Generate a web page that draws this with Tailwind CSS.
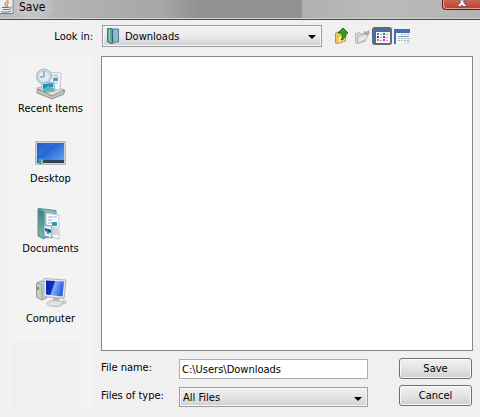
<!DOCTYPE html>
<html lang="en">
  <head>
    <meta charset="UTF-8" />
    <meta name="viewport" content="width=device-width, initial-scale=1.0" />
    <title>Save</title>
    <script src="https://cdn.jsdelivr.net/npm/@tailwindcss/browser@4"></script>
  </head>
  <body class="min-h-screen flex flex-col bg-[#f0f0f0] font-['DejaVu_Sans_Condensed','DejaVu_Sans',sans-serif] text-[11px] leading-4 text-black">
    <!-- Title bar -->
    <header class="flex h-5 shrink-0 items-start justify-between overflow-hidden border-b border-[#4c4c4c] bg-[linear-gradient(90deg,#bcbcbc_0%,#b4b4b4_12%,#a6a6a6_34%,#929292_41%,#929292_63%,#b0b0b0_63%,#bababa_78%,#b4b4b4_100%)] shadow-[inset_0_-1px_0_#d0d0d0]">
      <div class="flex items-start gap-[5px]">
        <svg class="h-[14px] w-[14px]" viewBox="0 0 14 14" aria-hidden="true">
          <path d="M0 0h13v13H0z" fill="#e9eef2" />
          <path d="M13 0v13.5H0" fill="none" stroke="#73828e" />
          <path d="M8 0C8 2 4 3 5 5l1 2M9 2C6 4 8 5 7 7" fill="none" stroke="#e98a35" stroke-width="1.3" />
          <path d="M2 7.500h7M3 9.500h6M9.500 7c3-.5 2 2-.5 2.500M1 11.500c3 1 8 1 10-.5" fill="none" stroke="#547b9b" />
        </svg>
        <h1 class="rounded-full bg-white/20 text-[12px] leading-[14px] shadow-[0_0_8px_6px_rgba(255,255,255,0.2)]">Save</h1>
      </div>
      <button type="button" aria-label="Close" class="flex h-[10px] w-[38px] items-start justify-center rounded-bl-[4px] border-b border-l border-[#5c1d15] bg-linear-to-b from-[#c4685a] to-[#c53a20] shadow-[inset_1px_-1px_0_#e7a092]">
        <svg class="h-[7px] w-3" viewBox="0 0 12 7" aria-hidden="true">
          <path d="M3 0h6L7.500 2l3.500 4.500H7L6 5 5 6.500H1L4.500 2z" fill="#f4f4f4" stroke="#5b4a52" stroke-width=".8" />
        </svg>
      </button>
    </header>

    <form class="flex flex-1 flex-col gap-[9px] px-[7px] pt-[5px] pb-[10px]">
      <!-- Look in -->
      <div class="flex h-[22px] items-center">
        <label for="lookIn" class="w-[95px] pt-px pr-[9px] text-right">Look in:</label>
        <div class="relative w-[220px]">
          <select id="lookIn" class="block h-[22px] w-full appearance-none border border-[#9c9ca4] bg-linear-to-b from-[#f4f4f4] from-0% via-[#ebebeb] via-50% to-[#d0d0d0] pt-[2px] pl-[22px] shadow-[inset_0_0_0_1px_#f7f7f7]">
            <option>Downloads</option>
          </select>
          <svg class="pointer-events-none absolute top-[3px] left-[5px] h-4 w-3" viewBox="0 0 12 16" aria-hidden="true">
            <path d="M.5.5h4.500l1 2V16L.5 14z" fill="#66a596" stroke="#3c7a8c" />
            <path d="M5 1h6.500v13H6z" fill="#8ac0b8" stroke="#477e9f" />
            <path d="M5.500 2v12" stroke="#365f88" />
            <path d="M2.500 2v11" stroke="#9ed2b4" />
          </svg>
          <svg class="pointer-events-none absolute top-[10px] right-[6px] h-1 w-2" viewBox="0 0 8 4" aria-hidden="true">
            <path d="M0 0h8L4 4z" />
          </svg>
        </div>
        <div class="ml-3 flex items-center gap-[2px]">
          <button type="button" aria-label="Up one level" class="mr-[2px]">
            <svg class="h-[18px] w-4" viewBox="0 0 16 18">
              <path d="M1.500 6l4-1.500 1 1.500 5-1v9l-8 2.500-2-.5z" fill="#f2cf59" stroke="#c09732" />
              <path d="M4 9.500l9-3-2 7-7.500 3z" fill="#ffec9b" stroke="#d3a93f" />
              <path d="M9 1l5 5h-2.500c.5 4-1 6-4.500 7 1.500-2 1.500-4 1-7H4z" fill="#35a02b" stroke="#14661a" />
            </svg>
          </button>
          <button type="button" aria-label="Create new folder" disabled>
            <svg class="h-[18px] w-4" viewBox="0 0 16 18">
              <path d="M1.500 6.500l4-1 1 1.500 5-1v8l-8 2.500-2-.5z" fill="#d4d4d4" stroke="#b8b8b8" />
              <path d="M4 9.500l6-2 5-2-3 7-8.500 4z" fill="#e8e8e8" stroke="#b8b8b8" />
              <path d="M10.500 4.500l2 1 2-2 .5 3-2 1.500-2-1z" fill="#b4b4b4" stroke="#999" stroke-width=".8" />
            </svg>
          </button>
          <button type="button" aria-label="List view" aria-pressed="true" class="flex h-[18px] w-5 items-center justify-center rounded-[3px] border-2 border-[#686868] bg-[#d5d5d5]">
            <svg class="h-[14px] w-4" viewBox="0 0 16 14">
              <path d="M0 0h16v14H0z" fill="#3f70b5" />
              <path d="M2 3h14v11H2z" fill="#f4f8fd" />
              <path d="M3 4h2v2H3z" fill="#109de0" />
              <path d="M3 7h2v2H3z" fill="#d01822" />
              <path d="M3 10h2v2H3z" fill="#ff7d18" />
              <path d="M9 4h2v2H9z" fill="#109b28" />
              <path d="M9 7h2v2H9z" fill="#9b20b8" />
              <path d="M9 10h2v2H9z" fill="#f32cc8" />
              <path d="M6 5.500h2m4 0h2M6 8.500h2m4 0h2M6 11.500h2m4 0h2" stroke="#a3adba" />
            </svg>
          </button>
          <button type="button" aria-label="Details view">
            <svg class="h-[15px] w-4" viewBox="0 0 16 15">
              <path d="M0 0h16v15H0z" fill="#3f70b5" />
              <path d="M2 4h14v11H2z" fill="#f3f8fd" />
              <path d="M9 15l7-7v7z" fill="#d5e7f6" />
              <path d="M7 5.500h8M4 9.500h11M4 11.500h11" stroke="#a9b4c2" stroke-dasharray="2 1" />
              <path d="M4 7.500h11" stroke="#8e9bad" />
            </svg>
          </button>
        </div>
      </div>

      <div class="flex flex-1 gap-2">
        <!-- Places -->
        <nav aria-label="Places" class="ml-px flex w-[85px] shrink-0 flex-col bg-[#f3f3f3] px-[3px]">
          <button type="button" class="flex h-[70px] flex-col items-center gap-px pt-3">
            <svg class="h-8 w-8" viewBox="0 0 32 32" aria-hidden="true">
              <path d="M2 21l8-4 20 5-1 4-12 5-15-6z" fill="#888987" />
              <path d="M2 20l10-3 18 5-13 6z" fill="#dedfdd" stroke="#a0a19f" stroke-width=".7" />
              <path d="M13 4l13 1-1 17-12-1z" fill="#fbfbfb" stroke="#bfc4c6" />
              <path d="M16 7h7M15 9h3m1 0h5M15 15h8" stroke="#a5b2ba" />
              <path d="M18 10h5v3h-5z" fill="#4b9cc8" />
              <circle cx="9" cy="8.500" r="7.500" fill="#c6d8e2" stroke="#a5b7c1" />
              <circle cx="9" cy="8.500" r="5" fill="#dfecf2" />
              <path d="M9 3v6H5" fill="none" stroke="#648293" />
              <path d="M7 15l12-1 1 9-13 2z" fill="#eef9fc" stroke="#88b7d0" />
              <path d="M8 16l10-1 .5 4-10.500 2z" fill="#2c87d4" />
              <path d="M8 21l5-3 6 2v3L8 24.500z" fill="#58ba9e" />
              <path d="M2 21v4l15 6 12-5v-4l-12 6z" fill="#c3c4c2" stroke="#858684" stroke-width=".7" />
            </svg>
            <span>Recent Items</span>
          </button>
          <button type="button" class="flex h-[70px] flex-col items-center gap-px pt-3">
            <svg class="h-8 w-8" viewBox="0 0 32 32" aria-hidden="true">
              <defs>
                <linearGradient id="sky" x1="0" y1="0" x2="1" y2="1">
                  <stop offset="0" stop-color="#2a5fb8" />
                  <stop offset=".35" stop-color="#2f6fd8" />
                  <stop offset=".38" stop-color="#2563d4" />
                  <stop offset="1" stop-color="#6cabf5" />
                </linearGradient>
              </defs>
              <path d="M.5 3.500h30v23H.5z" fill="#c9d2dd" stroke="#b0b8c4" />
              <path d="M2 5h27v20H2z" fill="url(#sky)" />
              <path d="M2 22h27v3H2z" fill="#334158" />
              <circle cx="5.500" cy="23" r="3" fill="#2196c7" />
              <path d="M4 21.500h1.500V23H4z" fill="#f15d32" />
              <path d="M6 21.500h1.500V23H6z" fill="#8fe04c" />
              <path d="M6 23.500h1.500V25H6z" fill="#ffe15a" />
            </svg>
            <span>Desktop</span>
          </button>
          <button type="button" class="flex h-[70px] flex-col items-center gap-px pt-3">
            <svg class="h-8 w-8" viewBox="0 0 32 32" aria-hidden="true">
              <defs>
                <linearGradient id="folder" x1="0" y1="0" x2="0" y2="1">
                  <stop offset="0" stop-color="#417b96" />
                  <stop offset="1" stop-color="#76bd98" />
                </linearGradient>
              </defs>
              <path d="M4 .5l17 2V28l-12 2z" fill="#89b9b6" stroke="#5b9095" />
              <path d="M11 5l13 2v24l-13-3z" fill="#f8fafb" stroke="#bcc7ce" />
              <path d="M13 9h5m1 0h3M13 12h4M13 15h4M18 20h5M18 22h5M18 24h5M18 26h5" stroke="#a3b2bd" />
              <path d="M17 14h5v4h-5z" fill="#3c91b8" />
              <path d="M3 .5l6 3V31l-6-3z" fill="url(#folder)" stroke="#5a8f93" />
              <path d="M9 17l8 1v12l-8-2z" fill="#dbe8f4" stroke="#7f9dba" />
              <path d="M10 20l3 1v3l-3-1z" fill="#3e5db0" />
              <path d="M13 21l3 1v3l-3-1z" fill="#263f7d" />
              <path d="M12 23l2 .5V26l-2-.5z" fill="#299a77" />
            </svg>
            <span>Documents</span>
          </button>
          <button type="button" class="flex h-[70px] flex-col items-center gap-px pt-3">
            <svg class="h-8 w-8" viewBox="0 0 32 32" aria-hidden="true">
              <defs>
                <linearGradient id="screen" x1="0" y1="0" x2="1" y2=".3">
                  <stop offset="0" stop-color="#0520a3" />
                  <stop offset=".45" stop-color="#1230cc" />
                  <stop offset=".5" stop-color="#89aff7" />
                  <stop offset="1" stop-color="#2a62df" />
                </linearGradient>
              </defs>
              <path d="M1.500 5l5-2 5 1v16l-5 2-5-3z" fill="#c9cccb" stroke="#959897" />
              <path d="M2 5l5 2v15" fill="none" stroke="#9b9e9d" />
              <path d="M3 9v3" stroke="#37c828" stroke-width="2" />
              <path d="M18 19l6 1 1 4h-7z" fill="#b5b8b8" />
              <ellipse cx="20" cy="25.500" rx="8" ry="3" fill="#e0e2e2" stroke="#b3b6b6" />
              <path d="M9 .5l22 1.500-2 18.500-20-2z" fill="#e7e9eb" stroke="#b0b4b8" />
              <path d="M11 2.500l18 1-1.500 15L11 16.500z" fill="url(#screen)" />
              <ellipse cx="29" cy="24" rx="2" ry="1.500" fill="#d8d8d8" stroke="#aaa" stroke-width=".6" />
            </svg>
            <span>Computer</span>
          </button>
          <div class="mt-[6px] mr-[9px] flex-1 bg-[#f0f0f0]"></div>
        </nav>

        <div class="flex flex-1 flex-col gap-[7px]">
          <div role="listbox" aria-label="Files" class="flex-1 border border-[#828790] bg-white"></div>

          <div class="flex pr-px">
            <div class="flex flex-1 flex-col gap-2 pt-px">
              <div class="flex h-5">
                <label for="fileName" class="w-[78px] shrink-0 pt-px">File name:</label>
                <input id="fileName" type="text" value="C:\Users\Downloads" class="h-5 w-full min-w-0 border border-[#abadb3] bg-white px-[2px]" />
              </div>
              <div class="flex h-5">
                <label for="fileType" class="w-[78px] shrink-0 pt-px">Files of type:</label>
                <div class="relative flex-1">
                  <select id="fileType" class="block h-5 w-full appearance-none border border-[#9c9ca4] bg-linear-to-b from-[#f0f0f0] from-0% via-[#e4e4e4] via-50% to-[#d0d0d0] pt-[2px] pl-[3px] shadow-[inset_0_0_0_1px_#f7f7f7]">
                    <option>All Files</option>
                  </select>
                  <svg class="pointer-events-none absolute top-[10px] right-[6px] h-1 w-2" viewBox="0 0 8 4" aria-hidden="true">
                    <path d="M0 0h8L4 4z" />
                  </svg>
                </div>
              </div>
            </div>
            <div class="ml-[31px] flex w-[73px] shrink-0 flex-col gap-[6px]">
              <button type="submit" class="flex h-[21px] items-center justify-center rounded-[3px] border border-[#707070] bg-linear-to-b from-[#f2f2f2] from-0% via-[#e4e4e4] via-50% to-[#cfcfcf] shadow-[inset_0_0_0_1px_#fafafa]">Save</button>
              <button type="button" class="flex h-[21px] items-center justify-center rounded-[3px] border border-[#707070] bg-linear-to-b from-[#f2f2f2] from-0% via-[#e4e4e4] via-50% to-[#cfcfcf] shadow-[inset_0_0_0_1px_#fafafa]">Cancel</button>
            </div>
          </div>
        </div>
      </div>
    </form>
  </body>
</html>
